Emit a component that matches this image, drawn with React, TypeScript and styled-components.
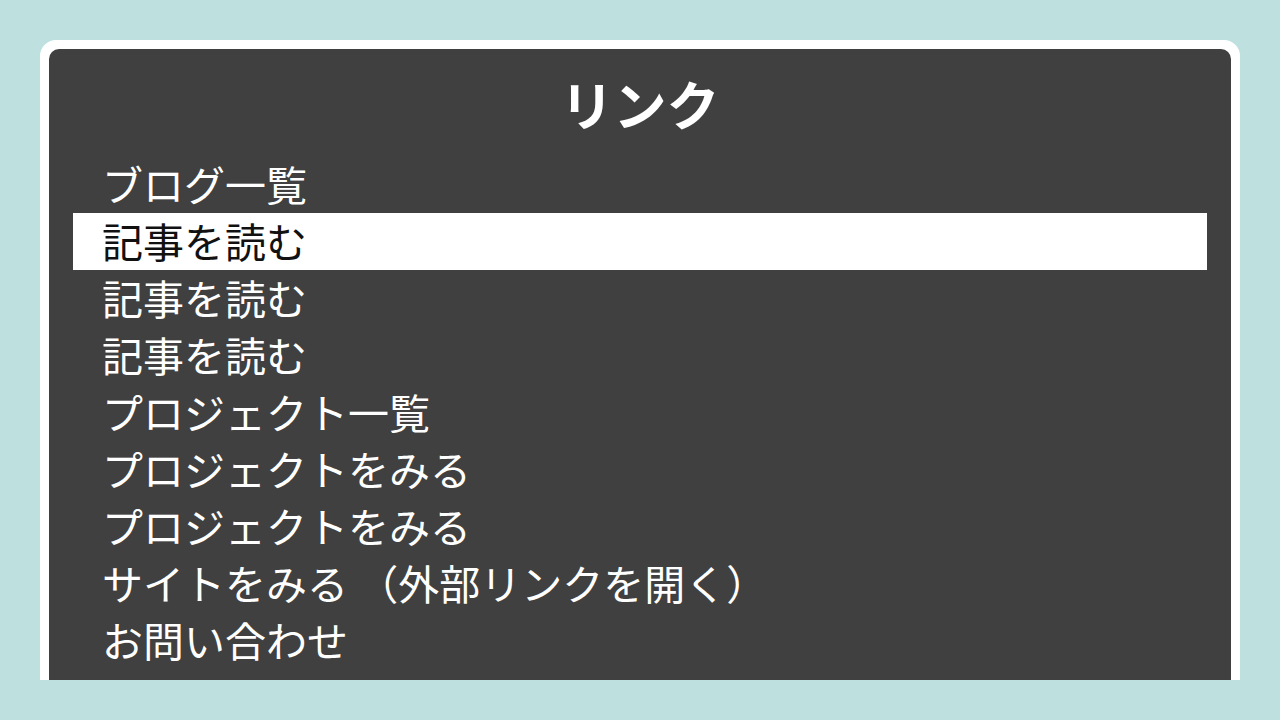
import React from 'react';
import styled, { createGlobalStyle } from 'styled-components';

const GlobalStyle = createGlobalStyle`
  html, body {
    margin: 0;
    padding: 0;
    background: #bee0df;
  }
  body {
    font-family: "Noto Sans CJK JP", "Noto Sans", sans-serif;
  }
`;

const Page = styled.div`
  width: 1280px;
  height: 720px;
  padding: 40px 40px 0;
  box-sizing: border-box;
`;

const Viewport = styled.div`
  height: 640px;
  overflow: hidden;
`;

const Frame = styled.div`
  background: #ffffff;
  padding: 9px 9px 0;
  border-radius: 16px 16px 0 0;
  min-height: 700px;
`;

const Panel = styled.div`
  background: #404040;
  border-radius: 10px 10px 0 0;
  padding: 14px 24px 40px;
  min-height: 691px;
  box-sizing: border-box;
`;

const Title = styled.h1`
  margin: 0 0 13px;
  text-align: center;
  color: #ffffff;
  font-size: 53px;
  font-weight: 700;
  line-height: 80px;
`;

const LinkList = styled.ul`
  list-style: none;
  margin: 0;
  padding: 0;
`;

const LinkItem = styled.li<{ $active?: boolean }>`
  height: 57px;
  line-height: 55px;
  padding-left: 29px;
  font-size: 41px;
  white-space: nowrap;
  color: ${(p) => (p.$active ? '#111111' : '#ffffff')};
  background: ${(p) => (p.$active ? '#ffffff' : 'transparent')};
`;

const links = [
  'ブログ一覧',
  '記事を読む',
  '記事を読む',
  '記事を読む',
  'プロジェクト一覧',
  'プロジェクトをみる',
  'プロジェクトをみる',
  'サイトをみる （外部リンクを開く）',
  'お問い合わせ',
];

const App: React.FC = () => {
  return (
    <>
      <GlobalStyle />
      <Page>
        <Viewport>
          <Frame>
            <Panel>
              <Title>リンク</Title>
              <LinkList>
                {links.map((label, index) => (
                  <LinkItem key={index} $active={index === 1}>
                    {label}
                  </LinkItem>
                ))}
              </LinkList>
            </Panel>
          </Frame>
        </Viewport>
      </Page>
    </>
  );
};

export default App;
